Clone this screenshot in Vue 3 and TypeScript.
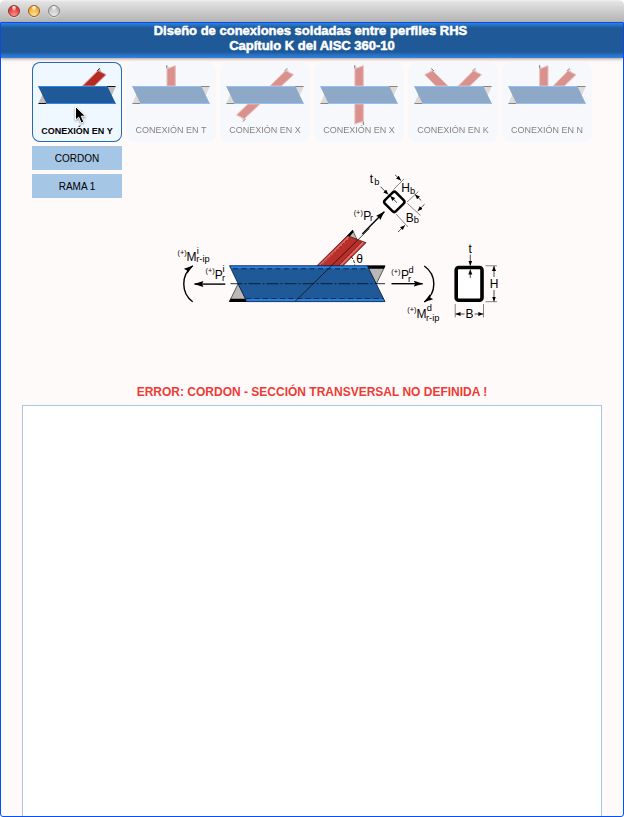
<script setup lang="ts">
interface Branch {
  body: string
  tip: string
  edge: string
}
interface Connection {
  label: string
  branches: Branch[]
}

const connections: Connection[] = [
  {
    label: 'CONEXIÓN EN Y',
    branches: [{ body: '50.5,24 66,8.7 73.9,12.7 62.3,24', tip: '64.5,9.7 67.7,6 69.8,11', edge: 'M65 9L67.7 6.3' }],
  },
  {
    label: 'CONEXIÓN EN T',
    branches: [{ body: '41,24 41,7 49.3,3.7 49.3,24', tip: '40.5,7 40.5,3 44,6', edge: 'M40.7 6.5V3' }],
  },
  {
    label: 'CONEXIÓN EN X',
    branches: [
      { body: '50,24 65.7,8.7 73.5,12.7 61.3,24', tip: '64,9.7 67.2,6 69.3,11', edge: 'M64.5 9L67.2 6.3' },
      { body: '28,42 16.5,53 24.3,56.7 40,42', tip: '21,55 23,59.5 26.3,56', edge: 'M23 59.5L25.5 57' },
    ],
  },
  {
    label: 'CONEXIÓN EN X',
    branches: [
      { body: '40.9,24 40.9,7 49.3,3.7 49.3,24', tip: '40.5,7 40.5,3 44,6', edge: 'M40.7 6.5V3' },
      { body: '40.9,42 40.9,62 49.3,59 49.3,42', tip: '46,60 49.7,63 49.7,59', edge: 'M49.5 59.5V63' },
    ],
  },
  {
    label: 'CONEXIÓN EN K',
    branches: [
      { body: '16.8,12.7 24.7,8.7 40,24 28,24', tip: '21.5,10.7 23.3,6 26.3,9.7', edge: 'M23.3 6.3L26 9' },
      { body: '50.3,24 65.5,8.7 73.5,12.7 61.6,24', tip: '64,9.7 67.2,6 69.3,11', edge: 'M64.5 9L67.2 6.3' },
    ],
  },
  {
    label: 'CONEXIÓN EN N',
    branches: [
      { body: '37.7,24 37.7,7 46,3.7 46,24', tip: '37.3,7 37.3,3 40.7,6', edge: 'M37.5 6.5V3' },
      { body: '51.3,24 66.1,8.7 73.9,12.7 62.3,24', tip: '64.5,9.7 67.5,6 69.8,11', edge: 'M64.8 9L67.5 6.3' },
    ],
  },
]
const active = 0
const members: string[] = ['CORDON', 'RAMA 1']
</script>

<template>
  <div class="window">
    <div class="titlebar">
      <span class="light red"></span>
      <span class="light yellow"></span>
      <span class="light gray"></span>
    </div>
    <div class="content">
      <header class="banner">
        <div class="line1">Diseño de conexiones soldadas entre perfiles RHS</div>
        <div class="line2">Capítulo K del AISC 360-10</div>
      </header>
      <nav class="cards">
        <div v-for="(c, i) in connections" :key="i" class="card" :class="{ active: i === active }">
          <svg class="icon" width="90" height="80" viewBox="0 0 90 80">
            <g v-for="(b, j) in c.branches" :key="j">
              <polygon :points="b.tip" fill="#b8b4b4" />
              <path :d="b.edge" stroke="#222" stroke-width="1" />
              <polygon :points="b.body" fill="#b52a23" stroke="#d8837e" stroke-width="1" />
            </g>
            <path d="M6 42L10.7 32L15 42ZM75 24H84L79.5 34Z" fill="#c0bcbc" />
            <polygon points="6,24 75.3,24 84,42 14.7,42" fill="#1f5998" />
            <path d="M6 24.5H75.5M14.5 41.5H84" stroke="#2c86e8" />
            <path d="M75.3 24.5H83.5M6.5 41.5H14" stroke="#111" />
          </svg>
          <span class="label">{{ c.label }}</span>
          <svg v-if="i === active" class="cursor" width="14" height="22" viewBox="0 0 14 22">
            <path d="M1.5 1.5V15L4.7 12.2L7.2 18L9.8 16.9L7.3 11.2H11.5Z" fill="#000" stroke="#fff" stroke-width="1" />
          </svg>
        </div>
      </nav>
      <div class="members">
        <button v-for="m in members" :key="m" class="member">{{ m }}</button>
      </div>
      <figure class="diagram">
        <svg width="340" height="165" viewBox="170 165 340 165">
          <defs>
            <marker id="force" markerUnits="userSpaceOnUse" markerWidth="10" markerHeight="8" refX="9" refY="3" orient="auto">
              <path d="M0 0L9.5 3L0 6L1.5 3Z" />
            </marker>
            <marker id="dim" markerUnits="userSpaceOnUse" markerWidth="6" markerHeight="5" refX="5" refY="2" orient="auto-start-reverse">
              <path d="M0 0L5 2L0 4Z" />
            </marker>
          </defs>

          <!-- branch -->
          <polygon points="347.3,235.7 352.7,230.3 357,239.5" fill="#c0bcbc" stroke="#111" stroke-width=".6" />
          <path d="M346.5 236.2L352.7 229.8L353.5 232L349.5 236.8Z" />
          <polygon points="316.7,266 347.3,235.7 366,242.7 342.7,266" fill="#bb2f28" />
          <path d="M319.5 266L349.7 236.5M340 266L363.5 242" stroke="#e26b66" stroke-width="2" />
          <path d="M320.5 265.5L350.5 236.8M338.5 265.5L362 241.6" stroke="#451311" stroke-width=".7" stroke-dasharray="3 1.2" />
          <path d="M316.7 266L347.3 235.7L366 242.7L342.7 266" fill="none" stroke="#541613" stroke-width=".8" />

          <!-- chord -->
          <path d="M229.5 301.3L238 284L247 301.3ZM367 266H385L376.3 284Z" fill="#bcb8b8" stroke="#222" stroke-width=".7" />
          <path d="M230.5 298.7H246L247.3 302H229ZM367 265.5H385.3L384 268.7H368.5Z" />
          <polygon points="229.5,265.7 367.3,265.7 385,301.6 246.7,301.6" fill="#1f5998" />
          <path d="M231 267.3H367.5M246 300.2H384" stroke="#287fdf" stroke-width="2.6" />
          <path d="M233 268.8H367M246 298.5H383" stroke="#07264c" stroke-width=".9" stroke-dasharray="5 3.5" />
          <polygon points="229.5,265.7 367.3,265.7 385,301.6 246.7,301.6" fill="none" stroke="#08213f" stroke-width=".8" />
          <path d="M230.5 283.7H385" stroke="#06172b" stroke-width=".9" stroke-dasharray="12 2 2 2" />
          <path d="M295 301.5L369.5 228.5" stroke="#0c1320" stroke-width=".8" />

          <!-- forces and moments -->
          <g fill="none" stroke="#000" stroke-width="1.4">
            <path d="M225.3 284.1H194.5" marker-end="url(#force)" />
            <path d="M391.5 283.7H422.7" marker-end="url(#force)" />
            <path d="M362.3 234L384.3 211.7" marker-end="url(#force)" />
            <path d="M192.7 301.7C180.8 293 180.8 275 192.7 265.7" marker-end="url(#force)" />
            <path d="M424.3 266C437 275 437 293 424.3 302" marker-end="url(#force)" />
          </g>
          <path d="M351 256.5Q354.5 260.5 354.8 265.5" fill="none" stroke="#000" stroke-dasharray="3 1.5" stroke-width=".9" />

          <!-- hollow sections -->
          <rect x="386.5" y="194" width="15.6" height="15.8" rx="2.5" transform="rotate(45 394.3 201.9)" fill="#fff" stroke="#000" stroke-width="2.5" />
          <rect x="456.2" y="267.5" width="25.8" height="32.8" rx="2.5" fill="#fff" stroke="#000" stroke-width="3.6" />

          <!-- dimensions -->
          <g fill="none" stroke="#777" stroke-width=".9">
            <path d="M393.5 189.5L404 179M407 202L418.5 191.5M407.5 203.5L420.5 215.5M396 214L408 227" />
            <path d="M485.5 265.8H497M485.5 301.7H497M455.2 304V317.5M483.5 304V317.5" />
          </g>
          <g fill="none" stroke="#222" stroke-width=".8">
            <path d="M395 174.8L401 180.5" marker-end="url(#dim)" />
            <path d="M421.2 200.5L415 194.4" marker-end="url(#dim)" />
            <path d="M424.5 204.3L417.7 211" marker-end="url(#dim)" />
            <path d="M398 232L405 225.2" marker-end="url(#dim)" />
            <path d="M380.5 186.7L388.3 194.5" marker-end="url(#dim)" />
            <path d="M397 202.7L390.2 196" marker-end="url(#dim)" />
            <path d="M470.3 254.5V265.7" marker-end="url(#dim)" />
            <path d="M470.3 278V269.5" marker-end="url(#dim)" />
            <path d="M494 277V266" marker-end="url(#dim)" />
            <path d="M494 290V301.5" marker-end="url(#dim)" />
            <path d="M464.5 314H455.5" marker-end="url(#dim)" />
            <path d="M474.5 314H483.3" marker-end="url(#dim)" />
          </g>

          <g class="main">
            <text x="186.5" y="261">M</text>
            <text x="214.8" y="279">P</text>
            <text x="363.3" y="220">P</text>
            <text x="401" y="279">P</text>
            <text x="416.5" y="318.4">M</text>
            <text x="369.7" y="183">t</text>
            <text x="401.3" y="192.2">H</text>
            <text x="405.8" y="222">B</text>
            <text x="356.2" y="263">θ</text>
            <text x="468.6" y="253">t</text>
            <text x="489.7" y="288.2">H</text>
            <text x="465.5" y="318.4">B</text>
          </g>
          <g class="sub">
            <text x="196.2" y="262.4">r-ip</text>
            <text x="196.8" y="253.6">i</text>
            <text x="222" y="281">r</text>
            <text x="222.5" y="271.6">i</text>
            <text x="370" y="221">r</text>
            <text x="408" y="281.8">r</text>
            <text x="408.5" y="272.6">d</text>
            <text x="426" y="320.6">r-ip</text>
            <text x="426.8" y="311">d</text>
            <text x="374.3" y="185">b</text>
            <text x="410" y="194">b</text>
            <text x="413.8" y="222.7">b</text>
          </g>
          <g class="sign">
            <text x="177.5" y="254.8">(+)</text>
            <text x="205.5" y="273.3">(+)</text>
            <text x="353.7" y="214.5">(+)</text>
            <text x="391.3" y="273.7">(+)</text>
            <text x="407.3" y="312">(+)</text>
          </g>
        </svg>
      </figure>
      <p class="error">ERROR: CORDON - SECCIÓN TRANSVERSAL NO DEFINIDA !</p>
      <section class="report"></section>
    </div>
  </div>
</template>

<style>
body {
  margin: 0;
  background: #fff;
}
</style>

<style scoped>
.window {
  width: 624px;
  height: 817px;
  box-sizing: border-box;
  display: flex;
  flex-direction: column;
  font-family: "Liberation Sans", Arial, sans-serif;
  color: #000;
  overflow: hidden;
}
.titlebar {
  flex: none;
  box-sizing: border-box;
  height: 22px;
  padding: 5px 0 0 8px;
  display: flex;
  gap: 8px;
  border-radius: 5px 5px 0 0;
  background: linear-gradient(#f0f0f0 0, #e2e2e2 2px, #b3b3b3 100%);
}
.light {
  box-sizing: border-box;
  width: 12px;
  height: 12px;
  border-radius: 50%;
  border: 1px solid #777;
  box-shadow: 0 1px 0 rgba(255, 255, 255, 0.45);
}
.red {
  border-color: #8f3431;
  background: radial-gradient(ellipse at 50% 12%, #fff 0, #f6aaa6 18%, transparent 36%), radial-gradient(circle at 50% 100%, #ff9c97 0, #dc3938 70%);
}
.yellow {
  border-color: #936021;
  background: radial-gradient(ellipse at 50% 12%, #fff 0, #fbe0a2 18%, transparent 36%), radial-gradient(circle at 50% 100%, #ffee9c 0, #f2a936 70%);
}
.gray {
  border-color: #858585;
  background: radial-gradient(ellipse at 50% 12%, #fff 0, #ddd 22%, transparent 40%), radial-gradient(circle at 50% 100%, #eee 0, #bebebe 75%);
}
.content {
  flex: 1;
  min-height: 0;
  display: flex;
  flex-direction: column;
  border: 1px solid #0050ff;
  border-radius: 0 0 3px 3px;
  background: #fffafa;
}
.banner {
  flex: none;
  height: 35px;
  background: linear-gradient(#2d83e0 0, #1f5998 5px, #1f5998 29px, #2872c6 32px, #2d83e0 100%);
  box-shadow: 0 1px 3px rgba(90, 60, 50, 0.5);
  color: #fff;
  font-size: 13px;
  font-weight: bold;
  line-height: 15px;
  text-align: center;
  white-space: nowrap;
  -webkit-text-stroke: 0.5px #fff;
}
.line1 {
  padding-right: 3px;
}
.cards {
  flex: none;
  display: flex;
  gap: 4px;
  padding: 4px 0 0 31px;
}
.card {
  position: relative;
  box-sizing: border-box;
  width: 90px;
  height: 80px;
  border-radius: 8px;
  background: #f0f8ff;
  opacity: 0.5;
  display: grid;
  justify-items: center;
}
.card.active {
  opacity: 1;
  font-weight: bold;
  box-shadow: inset 0 0 0 1px #2469b3;
}
.icon,
.label {
  grid-area: 1 / 1;
}
.label {
  align-self: end;
  padding-bottom: 7px;
  font-size: 9px;
  line-height: 10px;
  white-space: nowrap;
}
.active .label {
  padding-bottom: 6px;
}
.cursor {
  position: absolute;
  left: 42px;
  top: 43px;
  filter: drop-shadow(0 1px 1px rgba(0, 0, 0, 0.4));
}
.members {
  flex: none;
  display: flex;
  flex-direction: column;
  gap: 4px;
  padding: 4px 0 0 31px;
}
.member {
  box-sizing: border-box;
  width: 90px;
  height: 24px;
  padding: 2px 0 0;
  border: 0;
  border-radius: 0;
  background: #a5c6e5;
  color: #000;
  font: 10px/22px "Liberation Sans", Arial, sans-serif;
}
.diagram {
  flex: none;
  height: 165px;
  margin: -33px 0 0 169px;
}
.diagram svg {
  display: block;
}
.main {
  font-size: 12px;
}
.sub {
  font-size: 9.3px;
}
.sign {
  font-size: 7.3px;
}
.error {
  flex: none;
  margin: 54px 0 0;
  height: 21px;
  line-height: 16px;
  font-size: 12px;
  font-weight: bold;
  text-align: center;
  white-space: nowrap;
  color: #ee3b35;
}
.report {
  flex: 1;
  margin: 0 21px;
  border: 1px solid #a5c6e5;
  border-bottom: 0;
  background: #fff;
}
</style>
